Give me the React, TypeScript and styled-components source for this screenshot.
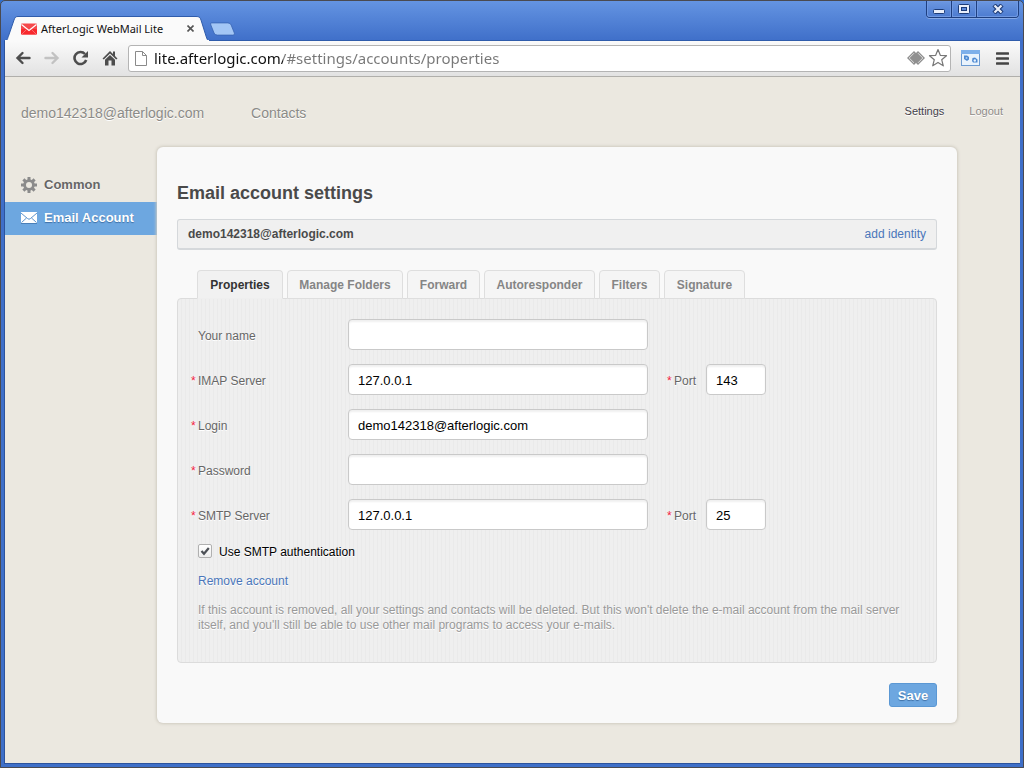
import React from "react";
import styled, { createGlobalStyle } from "styled-components";

const GlobalStyle = createGlobalStyle`
  * { box-sizing: border-box; }
  body {
    margin: 0;
    background: #2f6fd0;
    font-family: "Liberation Sans", Arial, sans-serif;
    font-size: 12px;
    line-height: 15px;
    color: #666;
  }
  button, input { font-family: inherit; }
  a { text-decoration: none; }
`;

const Window = styled.div`
  display: flex;
  flex-direction: column;
  min-height: 100vh;
  padding: 0 3px 3px;
  border: 1px solid #4a4a50;
  border-radius: 5px 5px 0 0;
  background: linear-gradient(#6494e2, #3f6fc9 40px, #3e6fc8);
`;

const TitleBar = styled.header`
  display: flex;
  justify-content: space-between;
  height: 40px;
  box-shadow: inset 0 -1px 0 #2f5cab;
`;

const TabStrip = styled.div`
  display: flex;
  align-items: flex-end;
`;

const BrowserTab = styled.div`
  display: grid;
  width: 206px;
  height: 25px;
  > * { grid-area: 1 / 1; }
`;

const TabContent = styled.div`
  display: flex;
  align-items: center;
  padding: 0 10px 0 17px;
  font: 12px/16px "Noto Sans", "Open Sans", sans-serif;
  color: #111;
  z-index: 1;
`;

const TabTitle = styled.span`
  flex: 1;
  padding-left: 4px;
  font-size: 11px;
  white-space: nowrap;
`;

const IconButton = styled.button<{ $width: number }>`
  display: flex;
  align-items: center;
  justify-content: center;
  width: ${(p) => p.$width}px;
  padding: 0;
  border: 0;
  background: none;
`;

const NewTab = styled(IconButton)`
  align-self: center;
  padding-top: 16px;
`;

const WindowControls = styled.div`
  display: flex;
  height: 17px;
  margin-right: 1px;
  border: 1px solid #1e3f80;
  border-top: 0;
  border-radius: 0 0 4px 4px;
  box-shadow: 0 1px 0 #86a9e6;
`;

const ControlButton = styled(IconButton)`
  background: linear-gradient(#6c97e0, #4c7bd0);
  box-shadow: inset 0 0 0 1px #7099e2;
  & + & { border-left: 1px solid #1e3f80; }
  &:first-child { border-radius: 0 0 0 3px; }
  &:last-child { border-radius: 0 0 3px 0; }
`;

const Client = styled.div`
  display: flex;
  flex: 1;
  flex-direction: column;
  border: 1px solid #2c539d;
  border-top: 0;
  border-right-width: 0;
  background: #ebe8e0;
`;

const Toolbar = styled.div`
  display: flex;
  align-items: center;
  height: 36px;
  padding: 0 0 1px 3px;
  border-bottom: 1px solid #b0afab;
  background: linear-gradient(#fafafa, #e2e2e2);
`;

const AddressBar = styled.div`
  display: flex;
  flex: 1;
  align-items: center;
  height: 27px;
  margin: 0 6px 0 4px;
  padding: 0 1px 0 6px;
  border: 1px solid #b4b4b4;
  border-radius: 3px;
  background: #fff;
`;

/* The host name is dark and the path after it is grey. */
const AddressField = styled.input`
  flex: 1;
  min-width: 0;
  padding: 0 0 0 7px;
  border: 0;
  outline: 0;
  background: linear-gradient(90deg, #111 136px, #777 136px);
  background-clip: text;
  -webkit-text-fill-color: transparent;
  font: 15px/22px "Noto Sans", "Open Sans", sans-serif;
  color: #555;
`;

const PageHeader = styled.nav`
  display: flex;
  align-items: center;
  height: 70px;
  padding: 2px 17px 0 16px;
`;

const HeaderLink = styled.a`
  margin-right: 47px;
  font-size: 14px;
  color: #8b8b88;
  text-shadow: 0 1px 0 #fff;
`;

const UserLink = styled.a<{ $active?: boolean }>`
  margin-left: ${(p) => (p.$active ? "auto" : "25px")};
  padding-bottom: 4px;
  font-size: 11px;
  color: ${(p) => (p.$active ? "#443f4a" : "#8e8b88")};
  text-shadow: 0 1px 0 #fff;
`;

const Body = styled.div`
  display: flex;
  align-items: flex-start;
  padding: 0 63px 40px 0;
`;

const Sidebar = styled.nav`
  width: 152px;
  padding-top: 22px;
`;

const SideLink = styled.a<{ $active?: boolean }>`
  display: flex;
  align-items: center;
  gap: 7px;
  height: 33px;
  padding: 0 0 2px 16px;
  font-size: 13px;
  font-weight: bold;
  color: ${(p) => (p.$active ? "#fff" : "#666")};
  background: ${(p) => (p.$active ? "#6da7e0" : "none")};
  text-shadow: ${(p) => (p.$active ? "0 1px 1px #3e6fa5" : "0 1px 0 #fff")};
`;

const Card = styled.main`
  display: flex;
  flex: 1;
  flex-direction: column;
  min-width: 0;
  padding: 36px 20px 16px;
  border-radius: 6px;
  background: #f9f9f9;
  box-shadow: 0 0 3px 1px #cfcbc0;
`;

const Title = styled.h1`
  margin: 0 0 15px;
  font-size: 18px;
  line-height: 21px;
  color: #4a4a4a;
`;

const IdentityBar = styled.div`
  display: flex;
  align-items: center;
  justify-content: space-between;
  height: 31px;
  margin-bottom: 20px;
  padding: 0 10px;
  border: 1px solid #d5d8db;
  border-bottom-width: 2px;
  border-radius: 3px;
  background: #f0f0f0;
  color: #4a4a4a;
`;

const BlueLink = styled.a`
  color: #4a76ba;
`;

const Tabs = styled.div`
  display: flex;
  gap: 4px;
  padding-left: 20px;
`;

const Tab = styled.button<{ $width: number; $active?: boolean }>`
  width: ${(p) => p.$width}px;
  height: 29px;
  margin-bottom: -1px;
  padding: 0;
  border: 1px solid #dedede;
  border-bottom-color: ${(p) => (p.$active ? "#efefef" : "#dedede")};
  border-radius: 4px 4px 0 0;
  background: ${(p) => (p.$active ? "#f1f1f1" : "#f5f5f5")};
  font-size: 12px;
  font-weight: bold;
  white-space: nowrap;
  color: ${(p) => (p.$active ? "#333" : "#858585")};
  z-index: 1;
`;

const Panel = styled.form`
  display: flex;
  flex-direction: column;
  gap: 14px;
  padding: 20px 20px 29px 13px;
  border: 1px solid #dcdcdc;
  border-radius: 4px;
  background: repeating-linear-gradient(90deg, #efefef 0 3px, #eaeaea 3px 4px);
  text-shadow: 0 1px 0 #fff;
`;

const FormRow = styled.div`
  display: flex;
  align-items: center;
`;

const FieldLabel = styled.label<{ $width: number }>`
  display: flex;
  width: ${(p) => p.$width}px;
  padding-top: 4px;
`;

const Mark = styled.span`
  width: 7px;
  color: #f0203c;
`;

const TextField = styled.input<{ $width: number }>`
  width: ${(p) => p.$width}px;
  height: 31px;
  padding: 2px 9px 0;
  border: 1px solid #c9c9c9;
  border-radius: 4px;
  background: #fff;
  box-shadow: inset 0 2px 2px #f0f0f0;
  font-size: 13px;
  color: #000;
`;

const PortGroup = styled.div`
  display: flex;
  align-items: center;
  margin-left: 19px;
`;

const CheckRow = styled.label`
  display: flex;
  align-items: flex-start;
  gap: 7px;
  padding-left: 7px;
  line-height: 16px;
  color: #000;
`;

const CheckCell = styled.span`
  display: grid;
  > * { grid-area: 1 / 1; }
`;

const CheckInput = styled.input`
  appearance: none;
  width: 14px;
  height: 14px;
  margin: 0;
  border: 1px solid #b0b0b0;
  border-radius: 2px;
  background: linear-gradient(#fff, #eee);
`;

const CheckMark = styled.svg`
  width: 14px;
  height: 14px;
  pointer-events: none;
  ${CheckInput}:not(:checked) + & { display: none; }
`;

const Note = styled.p`
  margin: 0;
  padding-left: 7px;
  color: #999;
`;

const RemoveRow = styled.div`
  padding-left: 7px;
`;

const SaveButton = styled.button`
  align-self: flex-end;
  width: 48px;
  height: 24px;
  margin-top: 20px;
  padding: 0;
  border: 1px solid #5b98d4;
  border-radius: 3px;
  background: #6da7e0;
  font-size: 13px;
  font-weight: bold;
  color: #fff;
  text-shadow: 0 1px 1px #3e6fa5;
`;

const TABS = [
  { name: "Properties", width: 86 },
  { name: "Manage Folders", width: 116 },
  { name: "Forward", width: 73 },
  { name: "Autoresponder", width: 111 },
  { name: "Filters", width: 61 },
  { name: "Signature", width: 81 },
];

interface FieldProps {
  id: string;
  label: string;
  value?: string;
  type?: string;
  required?: boolean;
  port?: string;
}

function Field({ id, label, value = "", type = "text", required = true, port }: FieldProps) {
  return (
    <FormRow>
      <FieldLabel htmlFor={id} $width={157}>
        <Mark>{required ? "*" : ""}</Mark>
        {label}
      </FieldLabel>
      <TextField id={id} type={type} defaultValue={value} $width={300} />
      {port && (
        <PortGroup>
          <FieldLabel htmlFor={`${id}-port`} $width={39}>
            <Mark>*</Mark>
            Port
          </FieldLabel>
          <TextField id={`${id}-port`} defaultValue={port} $width={60} />
        </PortGroup>
      )}
    </FormRow>
  );
}

const TabShape = () => (
  <svg width="206" height="25" viewBox="0 0 206 25">
    <path d="M0 25C4 25 3.500 22 4.500 20L10 4C11 1 12 0.5 14 0.5H192C195 0.5 196 1 197 4L202 20C203 23 203.500 25 206 25Z" fill="#fafafa" stroke="#2f5cab" />
    <path d="M1 24H205V25H1Z" fill="#fafafa" />
  </svg>
);

const RedMail = () => (
  <svg width="16" height="12" viewBox="0 0 16 12">
    <rect y="0.500" width="16" height="11" rx="1" fill="#f5484b" />
    <rect y="6" width="16" height="5.500" rx="1" fill="#f8292d" />
    <path d="M0.500 1.500L8 7.500L15.500 1.500" fill="none" stroke="#fff" strokeWidth="1.200" />
    <path d="M1 11L5.500 6.500M15 11L10.500 6.500" stroke="#f98a8c" strokeWidth="0.700" />
  </svg>
);

const Arrow = ({ color, flip }: { color: string; flip?: boolean }) => (
  <svg width="16" height="14" viewBox="0 0 16 14">
    <path
      d={flip ? "M1.500 7H13M8.500 2L13.500 7L8.500 12" : "M14.500 7H3M7.500 2L2.500 7L7.500 12"}
      fill="none"
      stroke={color}
      strokeWidth="2.400"
      strokeLinecap="round"
    />
  </svg>
);

const Reload = () => (
  <svg width="16" height="16" viewBox="0 0 16 16">
    <path d="M13.200 10A6 6 0 1 1 12 4" fill="none" stroke="#4d4d4d" strokeWidth="2.600" />
    <path d="M15 1V7.500H8.500Z" fill="#4d4d4d" />
  </svg>
);

const Home = () => (
  <svg width="16" height="16" viewBox="0 0 16 16" fill="#4d4d4d">
    <path d="M8 1L0.500 8.500L1.800 9.500L8 3.600L14.200 9.500L15.500 8.500L13 6V1.500H11V4Z" />
    <path d="M8 5L3 9.700V15.500H6.500V10.500H9.500V15.500H13V9.700Z" />
  </svg>
);

const PageIcon = () => (
  <svg width="12" height="15" viewBox="0 0 12 15">
    <path d="M1 0.500H7.500L11.500 4.500V14.500H0.500V0.500ZM7.500 0.500V4.500H11.500" fill="#fff" stroke="#8a8a8a" />
  </svg>
);

const Diamonds = () => (
  <svg width="20" height="16" viewBox="0 0 20 16">
    <path d="M8 1L15 8L8 15L1 8Z" fill="#8f8f8f" />
    <path d="M12 1L19 8L12 15L5 8Z" fill="#8f8f8f" />
    <path d="M8 3.200L3.200 8L8 12.800M12 3.200L16.800 8L12 12.800" fill="none" stroke="#dedede" />
  </svg>
);

const Star = () => (
  <svg width="20" height="20" viewBox="0 0 20 20">
    <path d="M10 1.500L12.300 7.300L18.500 7.700L13.700 11.700L15.300 17.800L10 14.400L4.700 17.800L6.300 11.700L1.500 7.700L7.700 7.300Z" fill="#fff" stroke="#777" strokeWidth="1.200" strokeLinejoin="round" />
  </svg>
);

const Extension = () => (
  <svg width="19" height="16" viewBox="0 0 19 16">
    <rect x="0.500" y="0.500" width="18" height="15" fill="#e9f3fd" stroke="#6c9bd2" />
    <path d="M0 0H19V4H0Z" fill="#7eb0ea" />
    <g fill="#4f8ad2">
      <path d="M3 5.500H6L8 7V9.500L6 11L3 9Z" />
      <path d="M11.500 8L14 7.500L16.500 9.500V12.500H12L11 11Z" />
    </g>
    <circle cx="5.500" cy="8" r="1" fill="#a9cbf2" />
    <circle cx="13.800" cy="10.500" r="1.200" fill="#e9f3fd" />
  </svg>
);

const Gear = () => (
  <svg width="16" height="16" viewBox="0 0 16 16">
    <g stroke="#8b8b8b" strokeWidth="3">
      <path d="M8 0V16M0 8H16M2.400 2.400L13.600 13.600M13.600 2.400L2.400 13.600" />
    </g>
    <circle cx="8" cy="8" r="5.800" fill="#8b8b8b" />
    <circle cx="8" cy="8" r="3" fill="#ebe8e0" />
  </svg>
);

const WhiteMail = () => (
  <svg width="16" height="12" viewBox="0 0 16 12">
    <rect y="1" width="16" height="11" fill="#4a7fb8" />
    <rect width="16" height="11" fill="#fff" />
    <path d="M0 1L6.500 6.500Q8 8 9.500 6.500L16 1M0.500 10.500L5.500 6M15.500 10.500L10.500 6" fill="none" stroke="#5b93cd" />
  </svg>
);

export default function App() {
  return (
    <Window>
      <GlobalStyle />
      <TitleBar>
        <TabStrip>
          <BrowserTab>
            <TabShape />
            <TabContent>
              <RedMail />
              <TabTitle>AfterLogic WebMail Lite</TabTitle>
              <IconButton $width={19} aria-label="Close tab">
                <svg width="7" height="7" viewBox="0 0 7 7">
                  <path d="M0.500 0.500L6.500 6.500M6.500 0.500L0.500 6.500" stroke="#555" strokeWidth="1.600" />
                </svg>
              </IconButton>
            </TabContent>
          </BrowserTab>
          <NewTab $width={26} aria-label="New tab">
            <svg width="32" height="16" viewBox="0 0 32 16">
              <path d="M2 0.500H22Q25 0.500 26 3L30 13Q31 15.500 28 15.500H9Q6 15.500 5 13L1 3Q0 0.500 2 0.500Z" fill="#a3c6f5" stroke="#3862b2" />
            </svg>
          </NewTab>
        </TabStrip>
        <WindowControls>
          <ControlButton $width={24} aria-label="Minimize">
            <svg width="12" height="10" viewBox="0 0 12 10">
              <rect x="0.500" y="5.500" width="11" height="4" rx="1" fill="#e8eefa" stroke="#1d3c78" />
            </svg>
          </ControlButton>
          <ControlButton $width={25} aria-label="Maximize">
            <svg width="12" height="10" viewBox="0 0 12 10">
              <rect x="0.500" y="0.500" width="11" height="9" rx="1" fill="#e8eefa" stroke="#1d3c78" />
              <rect x="3.500" y="3.500" width="5" height="3" fill="#5c88d8" stroke="#1d3c78" />
            </svg>
          </ControlButton>
          <ControlButton $width={42} aria-label="Close">
            <svg width="12" height="10" viewBox="0 0 12 10">
              <path d="M2 1L10 9M10 1L2 9" stroke="#1d3c78" strokeWidth="4.400" />
              <path d="M2.500 1.500L9.500 8.500M9.500 1.500L2.500 8.500" stroke="#e8eefa" strokeWidth="2.200" />
            </svg>
          </ControlButton>
        </WindowControls>
      </TitleBar>
      <Client>
        <Toolbar>
          <IconButton $width={29} aria-label="Back"><Arrow color="#4d4d4d" /></IconButton>
          <IconButton $width={29} aria-label="Forward"><Arrow color="#c2c2c2" flip /></IconButton>
          <IconButton $width={29} aria-label="Reload"><Reload /></IconButton>
          <IconButton $width={29} aria-label="Home"><Home /></IconButton>
          <AddressBar>
            <PageIcon />
            <AddressField aria-label="Address" defaultValue="lite.afterlogic.com/#settings/accounts/properties" />
            <IconButton $width={22} aria-label="Page action"><Diamonds /></IconButton>
            <IconButton $width={22} aria-label="Bookmark"><Star /></IconButton>
          </AddressBar>
          <IconButton $width={27} aria-label="Extension"><Extension /></IconButton>
          <IconButton $width={36} aria-label="Menu">
            <svg width="13" height="13" viewBox="0 0 13 13">
              <path d="M1 1.500H12M1 6.500H12M1 11.500H12" stroke="#444" strokeWidth="2.600" strokeLinecap="round" />
            </svg>
          </IconButton>
        </Toolbar>
        <PageHeader>
          <HeaderLink href="#mail">demo142318@afterlogic.com</HeaderLink>
          <HeaderLink href="#contacts">Contacts</HeaderLink>
          <UserLink href="#settings" $active>Settings</UserLink>
          <UserLink href="#logout">Logout</UserLink>
        </PageHeader>
        <Body>
          <Sidebar>
            <SideLink href="#common"><Gear />Common</SideLink>
            <SideLink href="#accounts" $active><WhiteMail />Email Account</SideLink>
          </Sidebar>
          <Card>
            <Title>Email account settings</Title>
            <IdentityBar>
              <strong>demo142318@afterlogic.com</strong>
              <BlueLink href="#identity">add identity</BlueLink>
            </IdentityBar>
            <Tabs role="tablist">
              {TABS.map((tab, i) => (
                <Tab key={tab.name} role="tab" aria-selected={i === 0} $width={tab.width} $active={i === 0}>
                  {tab.name}
                </Tab>
              ))}
            </Tabs>
            <Panel id="properties">
              <Field id="name" label="Your name" required={false} />
              <Field id="imap" label="IMAP Server" value="127.0.0.1" port="143" />
              <Field id="login" label="Login" value="demo142318@afterlogic.com" />
              <Field id="password" label="Password" type="password" />
              <Field id="smtp" label="SMTP Server" value="127.0.0.1" port="25" />
              <CheckRow>
                <CheckCell>
                  <CheckInput type="checkbox" defaultChecked />
                  <CheckMark viewBox="0 0 14 14">
                    <path d="M3.500 7L6 9.800L10.800 4" fill="none" stroke="#4d5157" strokeWidth="2.200" />
                  </CheckMark>
                </CheckCell>
                Use SMTP authentication
              </CheckRow>
              <RemoveRow><BlueLink href="#remove">Remove account</BlueLink></RemoveRow>
              <Note>
                If this account is removed, all your settings and contacts will be deleted. But this won't delete the
                e-mail account from the mail server itself, and you'll still be able to use other mail programs to
                access your e-mails.
              </Note>
            </Panel>
            <SaveButton type="submit" form="properties">Save</SaveButton>
          </Card>
        </Body>
      </Client>
    </Window>
  );
}
